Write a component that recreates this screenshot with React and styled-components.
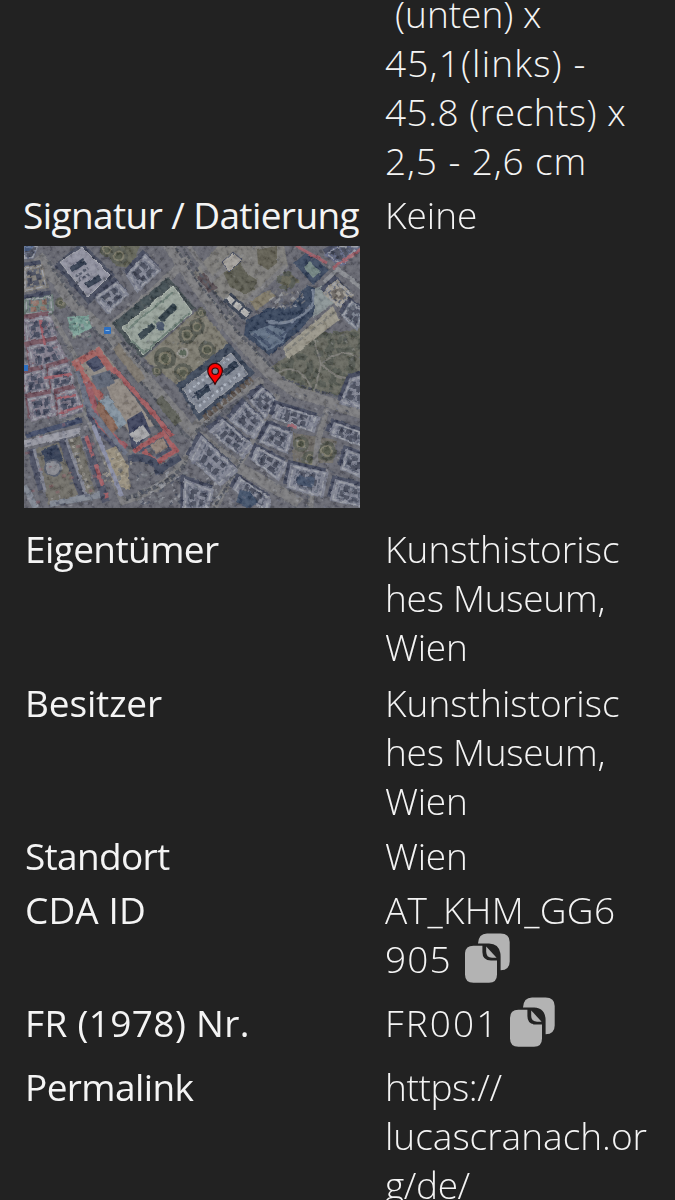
import React from 'react';
import styled, { createGlobalStyle } from 'styled-components';

const GlobalStyle = createGlobalStyle`
  * { box-sizing: border-box; }
  html, body { margin: 0; height: 1200px; overflow: hidden; background: #222; }
  body { font-family: "Open Sans", "Noto Sans", sans-serif; }
`;

const Page = styled.main`
  height: 1200px;
  overflow: hidden;
  background: #222;
  color: #f4f4f4;
  font-size: 37px;
  line-height: 49px;
`;

const Facts = styled.dl`
  margin: -11px 0 0;
  padding: 0;
`;

const FactRow = styled.div`
  display: grid;
  grid-template-columns: 336px 1fr;
  column-gap: 25px;
  padding-left: 24px;
  height: ${({ $height }) => $height}px;
`;

const Term = styled.dt`
  margin-left: ${({ $shift = 1 }) => $shift}px;
  font-weight: 400;
  letter-spacing: ${({ $spacing = 0 }) => $spacing}px;
  white-space: nowrap;
`;

const Detail = styled.dd`
  margin: 0;
  font-weight: 300;
`;

const Line = styled.span`
  display: flex;
  align-items: center;
  height: 49px;
  padding-left: ${({ $indent = 0 }) => $indent}px;
  letter-spacing: ${({ $spacing = 0 }) => $spacing}px;
  white-space: pre;
`;

const CopyButton = styled.button`
  display: block;
  width: 46px;
  height: 50px;
  margin: 0 0 2px ${({ $gap }) => $gap}px;
  padding: 0;
  border: 0;
  background: none;
  color: #b3b3b3;
`;

const MapFrame = styled.div`
  width: 336px;
  height: 262px;
  margin-top: 7px;
  overflow: hidden;

  svg { display: block; }
`;

function Copy({ gap }) {
  return (
    <CopyButton $gap={gap} aria-label="Kopieren">
      <svg width="46" height="50" viewBox="0 0 46 50" fill="currentColor">
        <path d="M14 10.5Q14.5.4 23 .4H36.5Q45.7.4 45.7 9V28.5Q45.7 37 36.6 37.3V23.5Q36.5 11 25 10.5Z" />
        <path d="M9.5 12.8H18.4V19Q18.4 27.5 27 27.5H33V41.5Q33 49.7 25 49.7H9.5Q1 49.7 1 41.5V21Q1 12.8 9.5 12.8Z" />
        <path d="M22.2 13.5L32.6 24.7H28Q22.2 24.7 22.2 18.5Z" />
      </svg>
    </CopyButton>
  );
}

const pt = (list) => list.map((p) => p.join(',')).join(' ');

const inset = (list, k) => {
  const cx = list.reduce((s, p) => s + p[0], 0) / list.length;
  const cy = list.reduce((s, p) => s + p[1], 0) / list.length;
  return list.map(([x, y]) => [cx + (x - cx) * k, cy + (y - cy) * k]);
};

function Block({ p, roof = '#7b7f8e', shade = '#3b4154', yard = '#3f4555', k = 0.42, grow = 1.08 }) {
  const outer = inset(p, grow);
  return (
    <g>
      <polygon points={pt(outer)} fill={shade} transform="translate(-2.5 -4)" />
      <polygon points={pt(outer)} fill={roof} />
      <polygon points={pt(inset(p, 0.9))} fill="none" stroke="#979aa2" strokeWidth="1.4" strokeDasharray="7 3" />
      <polygon points={pt(inset(p, 0.66))} fill="none" stroke="#555b6c" strokeWidth="1.6" strokeDasharray="4 2" />
      <polygon points={pt(inset(p, k))} fill="none" stroke={yard} strokeWidth="4.5" strokeDasharray="6 3" />
    </g>
  );
}

function random(seed) {
  let s = seed;
  return () => {
    s = (s * 16807) % 2147483647;
    return s / 2147483647;
  };
}

function Scatter({ seed, count, x, y, w, h, colors, angle, size = 4, opacity = 0.6 }) {
  const r = random(seed);
  return (
    <g opacity={opacity}>
      {Array.from({ length: count }, (_, i) => {
        const px = x + r() * w;
        const py = y + r() * h;
        return (
          <rect key={i} x={px} y={py} width={1 + r() * size} height={1 + r() * size * 0.6}
            fill={colors[Math.floor(r() * colors.length)]} transform={`rotate(${angle} ${px} ${py})`} />
        );
      })}
    </g>
  );
}

const GREY_BLOCKS = [
  [[226, 154], [238, 142], [253, 156], [241, 172]],
  [[206, 174], [221, 157], [241, 176], [229, 192]],
  [[186, 186], [199, 174], [228, 199], [218, 211]],
  [[166, 212], [178, 191], [213, 224], [196, 239]],
  [[249, 172], [254, 159], [294, 171], [289, 186]],
  [[236, 196], [246, 179], [268, 187], [263, 207]],
  [[228, 214], [234, 202], [263, 217], [254, 234]],
  [[263, 241], [268, 219], [303, 227], [298, 251]],
  [[306, 189], [311, 177], [340, 187], [340, 201]],
  [[316, 157], [326, 134], [340, 129], [340, 163]],
  [[317, 222], [323, 204], [340, 210], [340, 233]],
  [[307, 254], [312, 234], [340, 241], [340, 262]],
  [[209, 244], [216, 232], [246, 252], [243, 265]],
  [[160, 234], [189, 244], [183, 265], [160, 265]],
  [[103, 29], [121, 9], [136, 24], [114, 46]],
  [[71, 52], [93, 36], [104, 49], [84, 67]],
];

const RED_BLOCKS = [
  [[0, 74], [26, 70], [32, 91], [3, 97]],
  [[4, 101], [33, 95], [43, 116], [8, 124]],
  [[0, 128], [20, 124], [25, 144], [2, 149]],
  [[25, 123], [45, 117], [50, 140], [29, 146]],
  [[4, 153], [28, 148], [32, 169], [8, 175]],
  [[33, 148], [51, 143], [59, 164], [36, 172]],
];

const TREES = [
  [141, 112, 11], [163, 89, 9], [159, 126, 9], [173, 81, 8], [183, 104, 9], [133, 125, 5], [177, 67, 5],
  [277, 198, 8], [303, 205, 10], [286, 214, 9], [37, 57, 6], [95, 10, 9], [83, 4, 7],
];

const GROVES = [
  [276, 121, 13], [298, 98, 12], [317, 116, 14], [329, 96, 10], [301, 130, 11], [259, 126, 8], [327, 133, 9],
  [262, 35, 9], [284, 140, 8], [312, 144, 7], [311, 92, 7],
];

function SatelliteMap() {
  return (
    <MapFrame>
      <svg width="336" height="262" viewBox="0 0 336 262" role="img" aria-label="Satellitenkarte">
        <defs>
          <filter id="grain" x="0" y="0" width="100%" height="100%">
            <feTurbulence type="fractalNoise" baseFrequency="0.2" numOctaves="3" seed="7" />
            <feColorMatrix values="2.4 0 0 0 -.75  2.4 0 0 0 -.75  2.4 0 0 0 -.72  0 0 0 0 1" />
          </filter>
          <filter id="rough" x="0" y="0" width="100%" height="100%">
            <feTurbulence type="fractalNoise" baseFrequency="0.14" numOctaves="2" seed="3" />
            <feDisplacementMap in="SourceGraphic" scale="3" xChannelSelector="R" yChannelSelector="G" />
          </filter>
        </defs>
        <rect width="336" height="262" fill="#5f6169" />
        <g filter="url(#rough)">
          <rect width="336" height="262" fill="#5f6169" />

          {/* parks */}
          <polygon points="120,112 176,62 208,102 164,148" fill="#777468" />
          <polygon points="240,126 290,91 336,82 336,156 270,140" fill="#5e6056" />
          <polygon points="269,187 313,194 309,217 269,217" fill="#68655e" />
          <polygon points="168,28 194,0 260,0 264,20 214,66" fill="#777672" />
          <polygon points="82,0 116,0 106,22 92,20" fill="#5c5d50" />
          <polygon points="199,26 216,16 222,27 233,34 231,44 221,48 206,41" fill="#57564a" />
          <polygon points="233,4 253,0 253,17 244,24 234,18" fill="#5a594c" />
          <polygon points="253,35 264,26 276,35 262,43" fill="#5f5e50" />
          <polygon points="173,31 181,26 194,42 184,47" fill="#504549" />
          <polygon points="226,55 245,44 252,50 232,65" fill="#7a7361" />
          {GROVES.map(([x, y, r]) => (
            <circle key={`${x}-${y}`} cx={x} cy={y} r={r * 0.8} fill="none" stroke="#4b5046" strokeWidth={r * 0.5} strokeDasharray={`${r * 0.8} ${r * 0.35}`} />
          ))}
          {TREES.map(([x, y, r]) => (
            <g key={`${x}-${y}`}>
              <circle cx={x} cy={y} r={r} fill="#50534a" />
              <circle cx={x} cy={y} r={r * 0.6} fill="#747261" />
              <circle cx={x} cy={y} r={r * 0.38} fill="#4b5041" />
            </g>
          ))}
          <path d="M289 91L297 118L290 148M297 118Q320 100 334 112M297 118Q320 140 336 128M252 128Q276 112 290 148" fill="none" stroke="#77766f" strokeWidth="1.8" />

          {/* streets */}
          <g fill="none" stroke="#757577">
            <path d="M14 10L52 62L83 86L122 132L166 183L216 222L276 257" strokeWidth="11" />
            <path d="M143 -4L168 34L206 84L246 128L272 146L340 168" strokeWidth="11" />
            <path d="M80 86L130 45L165 12" strokeWidth="8" />
            <path d="M166 183L206 152L238 134" strokeWidth="8" />
            <path d="M96 256Q140 244 156 220L176 192" strokeWidth="7" />
            <path d="M0 190L34 182L62 166M62 166L98 256M24 62L50 108L64 172" strokeWidth="5" />
            <path d="M303 163L294 194L286 262M254 148L226 200L190 262" strokeWidth="6" />
            <path d="M165 0L188 34L215 8M194 82L262 20" strokeWidth="5" />
          </g>
          <g fill="none" stroke="#474c54" strokeWidth="2.4" strokeDasharray="5 2">
            <path d="M48 66L80 92L160 188L212 230M148 -4L174 36L212 84L250 124M226 200L190 262" />
            <path d="M156 -2L180 34L216 80M24 16L56 60M258 132L284 142L340 158" />
            <path d="M98 96L126 128M172 186L240 139M102 252Q146 240 162 216" strokeWidth="4" />
          </g>
          <polygon points="88,103 95,98 122,132 114,137" fill="#777066" />
          <polygon points="131,155 138,149 158,174 151,180" fill="#57584f" />

          {/* upper left quarter */}
          <Block p={[[0, 22], [18, 19], [23, 41], [0, 46]]} roof="#7c7872" />
          <Block p={[[0, 0], [14, 0], [9, 12], [0, 13]]} roof="#68708a" />
          <Block p={[[1, 54], [28, 49], [29, 66], [1, 69]]} roof="#6a7c76" yard="#8a685d" />
          <polygon points="30,19 58,-4 91,29 65,59" fill="#3d4355" />
          <polygon points="36,16 58,1 86,29 64,51" fill="#8b8d9b" stroke="#a2a3aa" />
          <polygon points="46,21 59,12 63,17 49,26" fill="#2b3547" />
          <polygon points="61,37 74,29 78,34 64,42" fill="#2b3547" />
          <path d="M51 31L64 22M54 35L67 27" stroke="#4a5061" strokeWidth="3" strokeDasharray="3 2" />
          <polygon points="43,71 64,69 68,82 49,91" fill="#759c92" />
          <Scatter seed={82} count={26} x={44} y={70} w={20} h={22} colors={['#a7b3a4', '#405a5a', '#8f9295']} angle={-12} />

          {/* museum with green roofs */}
          <polygon points="88,78 144,31 171,62 118,113" fill="#3d474b" />
          <polygon points="98,82 149,40 168,66 119,109" fill="#939f96" stroke="#b0b8ad" />
          <path d="M94 79L143 38" stroke="#39444a" strokeWidth="8" strokeDasharray="9 2" />
          <polygon points="113,89 128,77 131,82 118,94" fill="#2a3941" />
          <polygon points="134,72 149,57 153,62 139,76" fill="#2a3941" />
          <path d="M107 94L120 107L166 66M130 75L139 85M104 83L149 46" fill="none" stroke="#66796f" strokeWidth="2" />
          <circle cx="136" cy="80" r="4.5" fill="#3c4b61" />

          {/* red roofed quarter */}
          {RED_BLOCKS.map((p) => (
            <Block key={p[0].join()} p={p} roof="#7d7887" yard="#3c4256" shade="#6b4a54" />
          ))}
          <path d="M16 74L21 99M20 132L47 128M32 153L52 149M35 167L58 160" stroke="#9b555e" strokeWidth="2.5" />
          <path d="M50 114L75 100L96 126L62 136Z" fill="#88827c" />
          <path d="M62 116L74 108L83 120L70 126Z" fill="#3f4760" />
          <path d="M89 127L74 105L52 117L63 136L78 152" fill="none" stroke="#a05a58" strokeWidth="7" />
          <path d="M89 126L118 158L145 190" fill="none" stroke="#434857" strokeWidth="11" />
          <path d="M89 122L118 154L148 190" fill="none" stroke="#9e5558" strokeWidth="4.5" />
          <polygon points="80,137 96,132 120,165 130,180 104,186" fill="#8b837c" />
          <polygon points="67,130 86,124 91,137 73,144" fill="#59606f" />
          <path d="M63 136L70 158Q69 174 82 184L102 202" fill="none" stroke="#95515a" strokeWidth="6" />
          <path d="M57 138L64 160Q64 176 78 188L96 206" fill="none" stroke="#444a60" strokeWidth="4" />
          <polygon points="71,162 76,155 95,181 88,188" fill="#85604f" />
          <polygon points="76,155 84,149 103,177 95,183" fill="#7e8e9b" />
          <path d="M103 174L118 165L127 187L108 206Z" fill="#343b54" />
          <polygon points="105,188 119,179 126,189 112,198" fill="#a5a6a8" />
          <path d="M109 206L139 187L152 204L132 217L119 204" fill="none" stroke="#9e5356" strokeWidth="5" />
          <path d="M115 206L139 193L146 204L131 211" fill="none" stroke="#3f455c" strokeWidth="2.5" />
          <polygon points="126,199 138,192 144,201 132,208" fill="#8b7b70" />
          <path d="M104 213Q130 208 134 225L156 211" stroke="#383f55" strokeWidth="7" fill="none" />
          <polygon points="78,206 92,200 104,220 106,244 90,238" fill="#978e7a" />
          <Scatter seed={66} count={40} x={78} y={202} w={28} h={38} colors={['#b3ab98', '#555b68', '#77736a']} angle={-30} />

          {/* lower left courtyards */}
          <path d="M0 198L56 185" stroke="#93949f" strokeWidth="7" />
          <path d="M2 190L58 174" stroke="#39435f" strokeWidth="5" />
          <polygon points="12,203 56,190 72,250 24,258" fill="#6b6861" />
          <polygon points="17,204 33,198 40,215 22,219" fill="#2b364e" />
          <circle cx="29" cy="222" r="8" fill="#85868d" stroke="#4f5665" strokeWidth="2" />
          <path d="M7 203L18 244M38 193L59 251M61 190L82 256" stroke="#454a5d" strokeWidth="8" />
          <path d="M42 193L63 251M10 203L21 244" stroke="#7c7f8c" strokeWidth="3" />
          <path d="M47 193L66 246" stroke="#918e86" strokeWidth="3" strokeDasharray="3 4" />
          <path d="M62 190L83 252" stroke="#9b555b" strokeWidth="4" strokeDasharray="22 8" />
          <path d="M69 179L98 250" stroke="#8388a0" strokeWidth="4" />
          <path d="M0 240L12 262M26 258L76 249" stroke="#7b828e" strokeWidth="6" />
          <path d="M60 156L102 208M53 124L66 165" stroke="#636a7c" strokeWidth="5" />
          <Scatter seed={55} count={110} x={112} y={226} w={80} h={34} colors={['#a4a7b0', '#30384d', '#7c8088']} angle={-35} />

          {/* museum below the pin */}
          <polygon points="152,139 205,97 231,127 175,175" fill="#353f52" />
          <polygon points="158,143 207,107 224,128 175,167" fill="#7e8491" stroke="#989ba0" />
          <polygon points="171,147 183,139 187,144 174,153" fill="#202e40" />
          <polygon points="198,125 211,115 215,120 202,130" fill="#202e40" />
          <path d="M165 145L205 113M175 160L218 126" stroke="#a9b1bd" strokeWidth="2.5" strokeDasharray="2.5 3" />
          <path d="M168 152L212 119" stroke="#3b4558" strokeWidth="1.5" />
          <path d="M180 172L228 133" stroke="#544c44" strokeWidth="6" strokeDasharray="4 2" />
          <circle cx="159" cy="107" r="4.5" fill="#4c5849" stroke="#91908a" strokeWidth="2" />

          {/* palace */}
          <polygon points="222,75 243,62 266,61 274,51 283,39 293,43 293,66 276,84 246,110 220,89" fill="#2f3c55" />
          <path d="M241 75Q264 82 282 66Q292 57 289 43" fill="none" stroke="#6c788b" strokeWidth="3" />
          <polygon points="225,86 247,79 263,86 260,96 244,105" fill="#5a6a7f" />
          <path d="M230 88L247 101M242 83L259 94M257 90L274 75" stroke="#3a4862" strokeWidth="3" />
          <polygon points="259,102 309,60 315,74 265,113" fill="#969285" />
          <path d="M262 105L311 66" stroke="#77776f" strokeWidth="2" strokeDasharray="6 2" />
          <polygon points="291,42 302,40 310,57 289,72" fill="#858f90" />
          <polygon points="198,16 209,6 218,14 206,26" fill="#a09c97" stroke="#41475a" />
          <path d="M203 51L225 70" stroke="#303a4c" strokeWidth="12" />
          <path d="M203 51L225 70" stroke="#b4b3b0" strokeWidth="6" strokeDasharray="8 2" />
          <Scatter seed={31} count={42} x={244} y={45} w={34} h={18} colors={['#a7a9ac', '#495164', '#85817a']} angle={-38} />
          <polygon points="270,17 284,5 305,24 289,39" fill="#334058" />
          <polygon points="280,21 286,16 296,26 289,32" fill="#6e817e" />
          <Block p={[[299, 47], [313, 34], [329, 49], [316, 61]]} roof="#9a968d" yard="#6b6661" />
          <Block p={[[318, 70], [327, 55], [340, 64], [333, 84]]} roof="#747b89" />
          <Block p={[[317, 0], [335, 0], [318, 20], [301, 8]]} roof="#5b6280" />
          <path d="M272 0L303 17M309 22L340 1" stroke="#9c5a64" strokeWidth="3" />
          <path d="M300 36L314 23L340 44" fill="none" stroke="#82858a" strokeWidth="4" />

          {GREY_BLOCKS.map((p) => <Block key={p[0].join()} p={p} />)}
          <polygon points="275,229 291,232 289,242 272,238" fill="#3b4862" />
          <polygon points="216,244 226,246 234,256 226,262 212,256" fill="#384862" />
          <polygon points="264,178 274,180 273,183 263,181" fill="#9c606a" />
        </g>

        <Scatter seed={12} count={190} x={0} y={70} w={68} h={190} colors={['#a4a4ad', '#2f364b', '#8c5962', '#777c8d']} angle={-14} opacity={0.45} />
        <Scatter seed={91} count={280} x={162} y={145} w={174} h={115} colors={['#9fa1a9', '#343c4e', '#676d7f']} angle={34} opacity={0.4} size={3.4} />
        <Scatter seed={43} count={200} x={0} y={0} w={336} h={120} colors={['#a0a0a0', '#3e434b', '#777a80']} angle={-39} opacity={0.35} size={3.5} />
        <rect width="336" height="262" filter="url(#grain)" opacity="0.12" />

        <rect x="80" y="81" width="7" height="7" rx="1" fill="#2d6fc0" />
        <path d="M81.5 84.5H85.5" stroke="#88b6e5" />
        <rect x="0" y="119" width="4" height="6" fill="#2d6fc0" />
        <path d="M0 0H10L5 5H0Z" fill="#435d8c" opacity=".6" />

        {/* location pin */}
        <path d="M191 138.5C190 134 183.8 130.8 183.8 124.7A7.3 7.3 0 0 1 198.4 124.7C198.4 130.8 192 134 191 138.5Z" fill="#f00" stroke="#3b0709" strokeWidth="1.2" />
        <circle cx="191.2" cy="125.2" r="3.2" fill="#788793" stroke="#3b0709" strokeWidth="1.2" />
      </svg>
    </MapFrame>
  );
}

export default function App() {
  return (
    <>
      <GlobalStyle />
      <Page>
        <Facts>
          <FactRow $height={201}>
            <Term />
            <Detail>
              <Line $indent={10}>(unten) x</Line>
              <Line $spacing={1.15}>45,1(links) -</Line>
              <Line $spacing={0.5}>45.8 (rechts) x</Line>
              <Line $spacing={0.9}>2,5 - 2,6 cm</Line>
            </Detail>
          </FactRow>
          <FactRow $height={334}>
            <div>
              <Term $spacing={-0.6} $shift={-1}>Signatur / Datierung</Term>
              <SatelliteMap />
            </div>
            <Detail><Line>Keine</Line></Detail>
          </FactRow>
          <FactRow $height={154}>
            <Term $spacing={-0.6}>Eigentümer</Term>
            <Detail>
              <Line $spacing={0.05}>Kunsthistorisc</Line>
              <Line $spacing={-0.25}>hes Museum,</Line>
              <Line $spacing={-0.25}>Wien</Line>
            </Detail>
          </FactRow>
          <FactRow $height={153}>
            <Term $spacing={-0.14}>Besitzer</Term>
            <Detail>
              <Line $spacing={0.05}>Kunsthistorisc</Line>
              <Line $spacing={-0.25}>hes Museum,</Line>
              <Line $spacing={-0.25}>Wien</Line>
            </Detail>
          </FactRow>
          <FactRow $height={54}>
            <Term $spacing={-0.68}>Standort</Term>
            <Detail><Line $spacing={-0.25}>Wien</Line></Detail>
          </FactRow>
          <FactRow $height={113}>
            <Term $spacing={0.1}>CDA ID</Term>
            <Detail>
              <Line $spacing={0.38}>AT_KHM_GG6</Line>
              <Line $spacing={1.1}>905<Copy gap={12.3} /></Line>
            </Detail>
          </FactRow>
          <FactRow $height={64}>
            <Term $spacing={0.35}>FR (1978) Nr.</Term>
            <Detail><Line $spacing={2.1}>FR001<Copy gap={10} /></Line></Detail>
          </FactRow>
          <FactRow $height={160}>
            <Term $spacing={-0.6}>Permalink</Term>
            <Detail>
              <Line $spacing={-0.4}>https://</Line>
              <Line>lucascranach.or</Line>
              <Line $spacing={-0.4}>g/de/</Line>
            </Detail>
          </FactRow>
        </Facts>
      </Page>
    </>
  );
}
